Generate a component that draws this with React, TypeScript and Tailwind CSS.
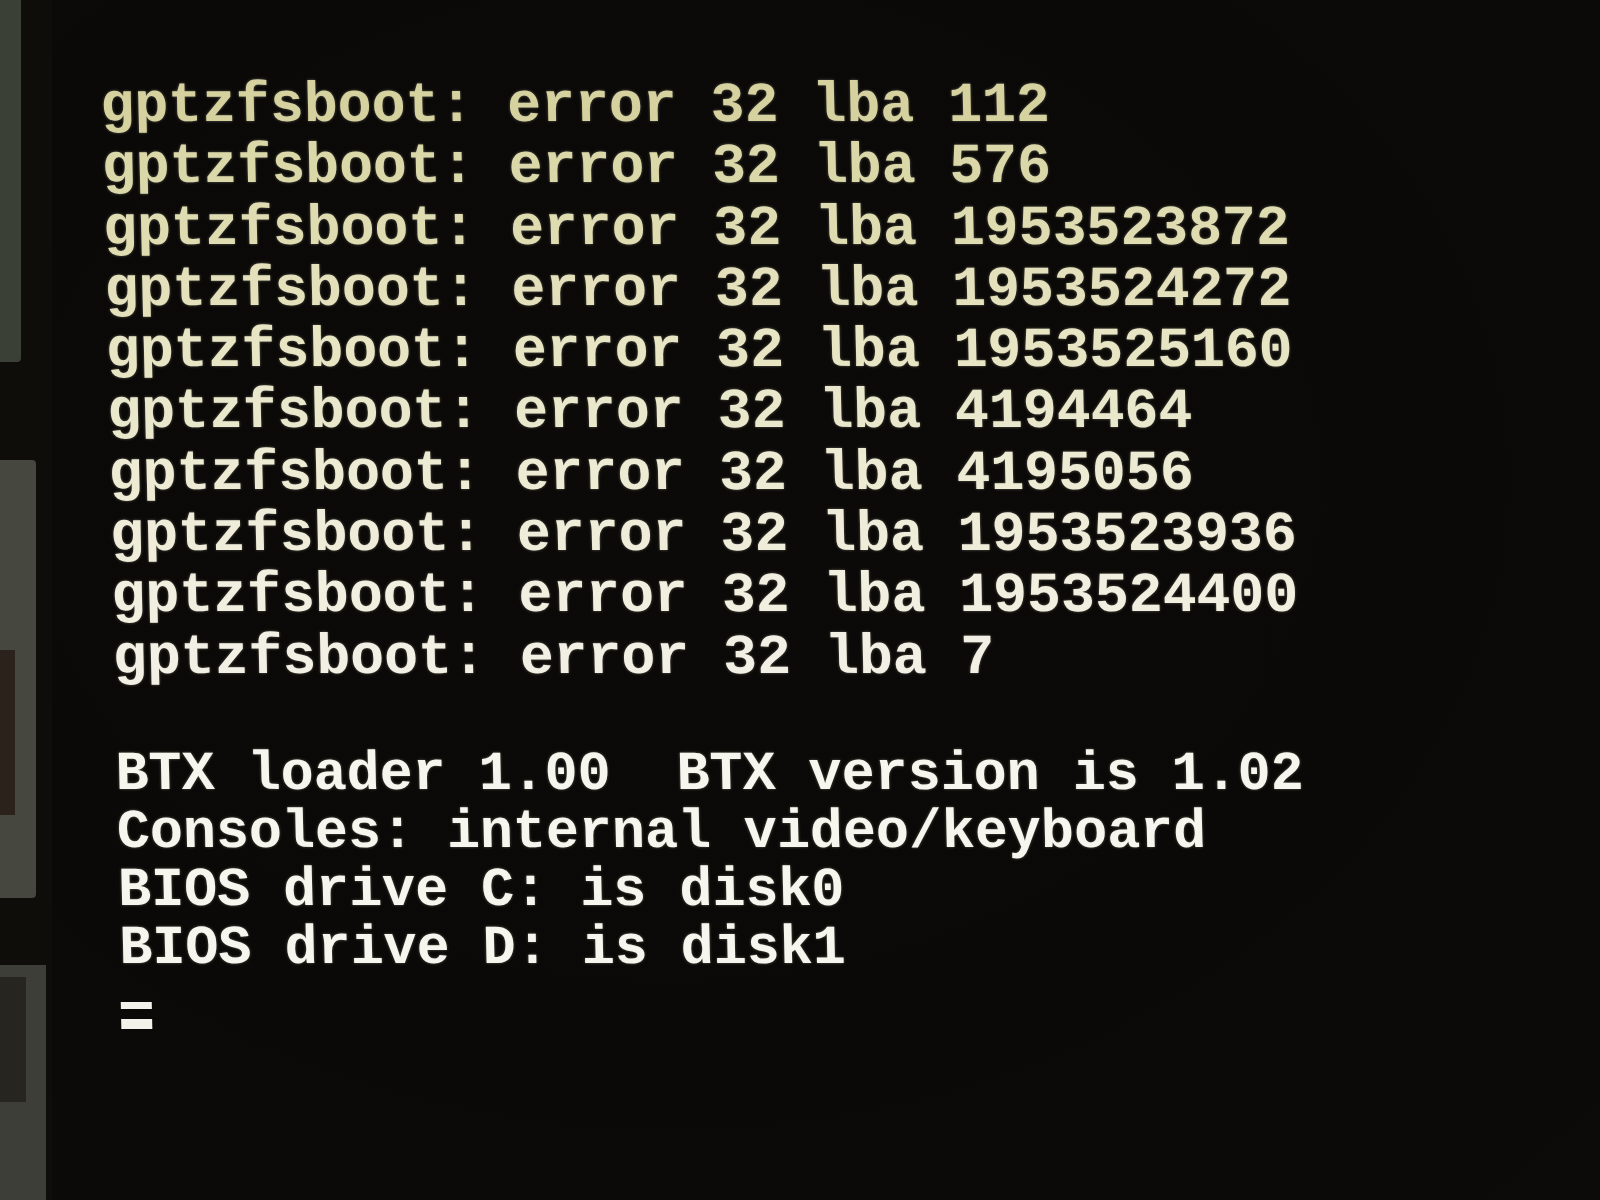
import React from "react";

const ERRORS = [
  { lba: "112", color: "text-[#d6d2a0]" },
  { lba: "576", color: "text-[#dad7a8]" },
  { lba: "1953523872", color: "text-[#dfdcb2]" },
  { lba: "1953524272", color: "text-[#e3e0bb]" },
  { lba: "1953525160", color: "text-[#e7e5c4]" },
  { lba: "4194464", color: "text-[#eae8cc]" },
  { lba: "4195056", color: "text-[#edebd4]" },
  { lba: "1953523936", color: "text-[#efedda]" },
  { lba: "1953524400", color: "text-[#f1efe0]" },
  { lba: "7", color: "text-[#f2f0e4]" },
];

const LOADER = [
  "BTX loader 1.00  BTX version is 1.02",
  "Consoles: internal video/keyboard",
  "BIOS drive C: is disk0",
  "BIOS drive D: is disk1",
];

function DeskEdge() {
  return (
    <div className="flex flex-col w-[52px] shrink-0">
      <div className="h-[362px] w-[21px] bg-[#3b4037] rounded-br-sm" />
      <div className="h-[98px]" />
      <div className="h-[438px] w-[36px] bg-[#46473f] rounded-r-sm flex flex-col">
        <div className="h-[190px]" />
        <div className="h-[165px] w-[15px] bg-[#2b221b]" />
      </div>
      <div className="h-[67px]" />
      <div className="flex-1 w-[46px] bg-[#3d3e37] flex flex-col pt-[12px]">
        <div className="h-[125px] w-[26px] bg-[#262520]" />
      </div>
    </div>
  );
}

export default function App() {
  return (
    <div className="w-[1600px] h-[1200px] flex overflow-hidden bg-[#0e0d0a]">
      <DeskEdge />
      <div className="flex-1 bg-[radial-gradient(ellipse_at_40%_40%,#0b0a08_0%,#0a0907_60%,#0c0b09_100%)]">
        <div className="pl-[46px] pt-[76px] origin-top-left skew-x-[1.3deg] font-['Liberation_Mono',monospace] font-bold [text-shadow:0_0_3px_rgba(255,250,220,0.35)] whitespace-pre">
          <div className="flex flex-col">
            {ERRORS.map((row, i) => (
              <div key={i} className={`h-[61.3px] leading-[61.3px] text-[56.5px] ${row.color}`}>
                {`gptzfsboot: error 32 lba ${row.lba}`}
              </div>
            ))}
          </div>
          <div className="h-[57px]" />
          <div className="flex flex-col text-[55px] text-[#f6f5ee]">
            {LOADER.map((line) => (
              <div key={line} className="h-[58px] leading-[58px]">
                {line}
              </div>
            ))}
          </div>
          <div className="mt-[24px] flex flex-col w-[31px]">
            <div className="h-[7px] bg-[#f2f1ea]" />
            <div className="h-[10px]" />
            <div className="h-[10px] bg-[#f2f1ea]" />
          </div>
        </div>
      </div>
    </div>
  );
}
